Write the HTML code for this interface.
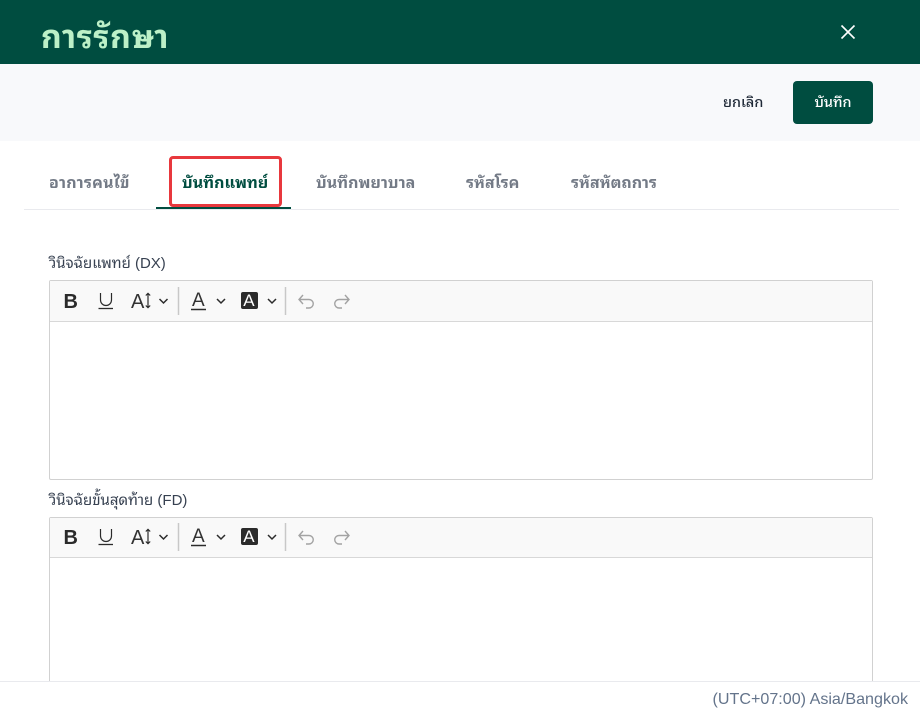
<!DOCTYPE html>
<html lang="th"><head><meta charset="utf-8"><style>
html,body{margin:0;padding:0;background:#fff}
body{width:920px;height:705px;position:relative;overflow:hidden;font-family:"Liberation Sans","Noto Sans Thai Looped","Loma","Garuda","Noto Sans Thai","Noto Sans CJK SC",sans-serif}
.a{position:absolute;white-space:nowrap}
.tab{top:174px;line-height:20px;font-size:16px;font-weight:700;color:#737a86}
.lbl{left:49px;font-size:15px;line-height:20px;color:#374151}
.ed{position:absolute;left:49px;width:822px;border:1px solid #d1d1d1;border-radius:2px;background:#fff;box-sizing:content-box}
.tb{position:absolute;left:0;top:0;right:0;background:#f9f9f9;border-bottom:1px solid #d8d8d8}
</style></head><body>
<div class="a" style="left:0;top:0;width:920px;height:64px;background:#004d40"></div>
<div class="a" style="left:41px;top:17px;font-size:32px;line-height:40px;color:#bcf0c8;font-weight:700;letter-spacing:.7px">การรักษา</div>
<svg class="a" style="left:838px;top:22px" width="20" height="20" viewBox="0 0 20 20"><path d="M3.500 3.500L16.500 16.500M16.500 3.500L3.500 16.500" stroke="#fff" stroke-width="1.600" fill="none"/></svg>
<div class="a" style="left:0;top:64px;width:920px;height:77px;background:#f8f9fb"></div>
<div class="a" style="left:723px;top:93px;font-size:14.400px;line-height:20px;color:#1f2937;font-weight:500">ยกเลิก</div>
<div class="a" style="left:793px;top:81px;width:80px;height:43px;background:#004d40;border-radius:4px;color:#fff;font-size:14.400px;line-height:44px;text-align:center;font-weight:500">บันทึก</div>
<div class="a tab" style="left:49px;letter-spacing:.25px">อาการคนไข้</div>
<div class="a tab" style="left:182px;color:#004d40">บันทึกแพทย์</div>
<div class="a tab" style="left:316px">บันทึกพยาบาล</div>
<div class="a tab" style="left:466px">รหัสโรค</div>
<div class="a tab" style="left:571px">รหัสหัตถการ</div>
<div class="a" style="left:24px;top:209px;width:875px;height:1px;background:#e9eaee"></div>
<div class="a" style="left:156px;top:207px;width:135px;height:2px;background:#004d40"></div>
<div class="a" style="left:169px;top:156px;width:113px;height:51px;box-sizing:border-box;border:3px solid #e8383d;border-radius:4px"></div>

<div class="a lbl" style="top:254px">วินิจฉัยแพทย์ (DX)</div>
<div class="ed" style="top:280px;height:198px"><div class="tb" style="height:39.500px"><svg width="330" height="40" viewBox="0 0 330 40" style="position:absolute;left:0;top:0">
<text x="13.500" y="27" font-family="Liberation Sans" font-weight="700" font-size="20" fill="#2b2b2b">B</text>
<path d="M50.500 12v7a5.500 5.500 0 0 0 11 0v-7" fill="none" stroke="#2b2b2b" stroke-width="1.200"/><path d="M48.500 27.500h14.500" stroke="#2b2b2b" stroke-width="1.300"/>
<text x="81" y="27" font-family="Liberation Sans" font-size="20" fill="#333">A</text>
<path d="M98 12.500v14M95.800 14.500l2.200-2.200 2.200 2.200M95.800 24.500l2.200 2.200 2.200-2.200" fill="none" stroke="#2b2b2b" stroke-width="1.200"/>
<path d="M109.500 18l4 4 4-4" fill="none" stroke="#2b2b2b" stroke-width="1.500"/>
<path d="M128.500 6v28" stroke="#c8c8c8" stroke-width="1.500"/>
<text x="142" y="25" font-family="Liberation Sans" font-size="19" fill="#333">A</text><path d="M141 28.500h15" stroke="#2b2b2b" stroke-width="1.500"/>
<path d="M167 18l4 4 4-4" fill="none" stroke="#2b2b2b" stroke-width="1.500"/>
<rect x="191" y="11" width="17" height="17" rx="2" fill="#2b2b2b"/><text x="193.300" y="25" font-family="Liberation Sans" font-size="17" fill="#fff">A</text>
<path d="M218 18l4 4 4-4" fill="none" stroke="#2b2b2b" stroke-width="1.500"/>
<path d="M235.500 6v28" stroke="#c8c8c8" stroke-width="1.500"/>
<path d="M253 14l-4 4.500 4 4.500M249 18.500h10a4.250 4.250 0 0 1 0 8.500h-3" fill="none" stroke="#a3a3a3" stroke-width="1.400"/>
<path d="M295 14l4 4.500-4 4.500M299 18.500h-10a4.250 4.250 0 0 0 0 8.500h3" fill="none" stroke="#a3a3a3" stroke-width="1.400"/>
</svg></div></div>

<div class="a lbl" style="top:491px">วินิจฉัยขั้นสุดท้าย (FD)</div>
<div class="ed" style="top:517px;height:180px"><div class="tb" style="height:39px"><svg width="330" height="40" viewBox="0 0 330 40" style="position:absolute;left:0;top:-1px">
<text x="13.500" y="27" font-family="Liberation Sans" font-weight="700" font-size="20" fill="#2b2b2b">B</text>
<path d="M50.500 12v7a5.500 5.500 0 0 0 11 0v-7" fill="none" stroke="#2b2b2b" stroke-width="1.200"/><path d="M48.500 27.500h14.500" stroke="#2b2b2b" stroke-width="1.300"/>
<text x="81" y="27" font-family="Liberation Sans" font-size="20" fill="#333">A</text>
<path d="M98 12.500v14M95.800 14.500l2.200-2.200 2.200 2.200M95.800 24.500l2.200 2.200 2.200-2.200" fill="none" stroke="#2b2b2b" stroke-width="1.200"/>
<path d="M109.500 18l4 4 4-4" fill="none" stroke="#2b2b2b" stroke-width="1.500"/>
<path d="M128.500 6v28" stroke="#c8c8c8" stroke-width="1.500"/>
<text x="142" y="25" font-family="Liberation Sans" font-size="19" fill="#333">A</text><path d="M141 28.500h15" stroke="#2b2b2b" stroke-width="1.500"/>
<path d="M167 18l4 4 4-4" fill="none" stroke="#2b2b2b" stroke-width="1.500"/>
<rect x="191" y="11" width="17" height="17" rx="2" fill="#2b2b2b"/><text x="193.300" y="25" font-family="Liberation Sans" font-size="17" fill="#fff">A</text>
<path d="M218 18l4 4 4-4" fill="none" stroke="#2b2b2b" stroke-width="1.500"/>
<path d="M235.500 6v28" stroke="#c8c8c8" stroke-width="1.500"/>
<path d="M253 14l-4 4.500 4 4.500M249 18.500h10a4.250 4.250 0 0 1 0 8.500h-3" fill="none" stroke="#a3a3a3" stroke-width="1.400"/>
<path d="M295 14l4 4.500-4 4.500M299 18.500h-10a4.250 4.250 0 0 0 0 8.500h3" fill="none" stroke="#a3a3a3" stroke-width="1.400"/>
</svg></div></div>

<div class="a" style="left:0;top:681px;width:920px;height:24px;background:#fff;border-top:1px solid #e9eaee;box-sizing:border-box"></div>
<div class="a" style="right:12px;top:689px;font-size:16.100px;line-height:20px;color:#64748b">(UTC+07:00) Asia/Bangkok</div>
</body></html>
